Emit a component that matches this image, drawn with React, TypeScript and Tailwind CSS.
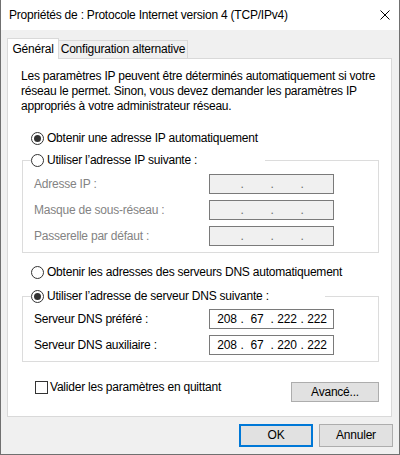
import React from 'react';

function Radio({ checked }: { checked?: boolean }) {
  return (
    <span className="w-[13px] h-[13px] rounded-full border border-[#333333] bg-white flex items-center justify-center shrink-0">
      {checked && <span className="w-[7px] h-[7px] rounded-full bg-[#333333]" />}
    </span>
  );
}

function IpBox({ values, disabled }: { values?: string[]; disabled?: boolean }) {
  const segs = values ?? ['', '', '', ''];
  return (
    <div
      className={
        disabled
          ? 'w-[125px] h-[20px] border border-[#7a7a7a] bg-[#f0f0f0] flex items-center pl-[5px] text-[#6d6d6d]'
          : 'w-[125px] h-[20px] border border-[#7a7a7a] bg-white flex items-center pl-[5px] text-black'
      }
    >
      {segs.map((s, i) => (
        <React.Fragment key={i}>
          <span className="w-[24px] text-center">{s}</span>
          {i < 3 && <span className="w-[6px] text-center">.</span>}
        </React.Fragment>
      ))}
    </div>
  );
}

function Field({ label, values, disabled }: { label: string; values?: string[]; disabled?: boolean }) {
  return (
    <div className="flex items-center h-[20px]">
      <span className={disabled ? 'w-[175px] text-[#838383]' : 'w-[175px]'}>{label}</span>
      <IpBox values={values} disabled={disabled} />
    </div>
  );
}

export default function App() {
  return (
    <div className="w-[400px] h-[455px] bg-[#f0f0f0] border-l border-r border-b border-[#707070] flex flex-col text-[12px] leading-[15px] tracking-[-0.22px] text-black font-['Segoe_UI','Liberation_Sans',sans-serif] overflow-hidden whitespace-nowrap">
      {/* title bar */}
      <div className="h-[30px] bg-white flex items-center justify-between pl-2 pr-[9px] shrink-0">
        <span>Propriétés de : Protocole Internet version 4 (TCP/IPv4)</span>
        <svg width="10" height="10" viewBox="0 0 10 10">
          <path d="M0.5 0.5 L9.5 9.5 M9.5 0.5 L0.5 9.5" stroke="#000" strokeWidth="1" fill="none" />
        </svg>
      </div>

      {/* tabs */}
      <div className="mt-[8px] ml-[6px] h-[21px] -mb-px flex items-end relative z-10">
        <div className="w-[52px] h-[21px] border border-b-0 border-[#d9d9d9] bg-white flex items-center justify-center">
          Général
        </div>
        <div className="w-[129px] h-[19px] border border-l-0 border-[#d9d9d9] bg-[#f0f0f0] flex items-center justify-center">
          Configuration alternative
        </div>
      </div>

      {/* panel */}
      <div className="ml-[6px] w-[385px] h-[359px] border border-[#d9d9d9] bg-white pt-[10px] flex flex-col shrink-0">
        <p className="pl-[13px]">
          Les paramètres IP peuvent être déterminés automatiquement si votre
          <br />
          réseau le permet. Sinon, vous devez demander les paramètres IP
          <br />
          appropriés à votre administrateur réseau.
        </p>

        <div className="mt-[16px] ml-[23px] h-4 flex items-center gap-[3px]">
          <Radio checked />
          <span>Obtenir une adresse IP automatiquement</span>
        </div>

        <fieldset className="mt-[6px] ml-[14px] w-[357px] border border-[#dcdcdc] px-[11px] pb-[6px] flex flex-col gap-[6px]">
          <legend className="ml-[-3px] w-[234px] h-4 flex items-center gap-[3px]">
            <Radio />
            <span>Utiliser l’adresse IP suivante :</span>
          </legend>
          <div className="h-0" />
          <Field label="Adresse IP :" disabled />
          <Field label="Masque de sous-réseau :" disabled />
          <Field label="Passerelle par défaut :" disabled />
        </fieldset>

        <div className="mt-[11px] ml-[23px] h-4 flex items-center gap-[3px]">
          <Radio />
          <span>Obtenir les adresses des serveurs DNS automatiquement</span>
        </div>

        <fieldset className="mt-[8px] ml-[14px] w-[357px] border border-[#dcdcdc] px-[11px] pb-[6px] flex flex-col gap-[6px]">
          <legend className="ml-[-3px] w-[294px] h-4 flex items-center gap-[3px]">
            <Radio checked />
            <span>Utiliser l’adresse de serveur DNS suivante :</span>
          </legend>
          <div className="h-0 -mb-px" />
          <Field label="Serveur DNS préféré :" values={['208', '67', '222', '222']} />
          <Field label="Serveur DNS auxiliaire :" values={['208', '67', '220', '222']} />
        </fieldset>

        <div className="mt-[19px] flex items-start">
          <div className="ml-[27px] flex items-center gap-[2px] h-[13px]">
            <span className="w-[13px] h-[13px] border border-[#333333] bg-white shrink-0" />
            <span>Valider les paramètres en quittant</span>
          </div>
          <button className="ml-auto mr-[12px] mt-[1px] w-[88px] h-[20px] border border-[#adadad] bg-[#e1e1e1] flex items-center justify-center">
            Avancé...
          </button>
        </div>
      </div>

      {/* dialog buttons */}
      <div className="mt-[7px] flex justify-end gap-[6px] pr-[6px]">
        <button className="w-[74px] h-[23px] border-2 border-[#0078d7] bg-[#e1e1e1] flex items-center justify-center">
          OK
        </button>
        <button className="w-[74px] h-[23px] border border-[#adadad] bg-[#e1e1e1] flex items-center justify-center">
          Annuler
        </button>
      </div>
    </div>
  );
}
